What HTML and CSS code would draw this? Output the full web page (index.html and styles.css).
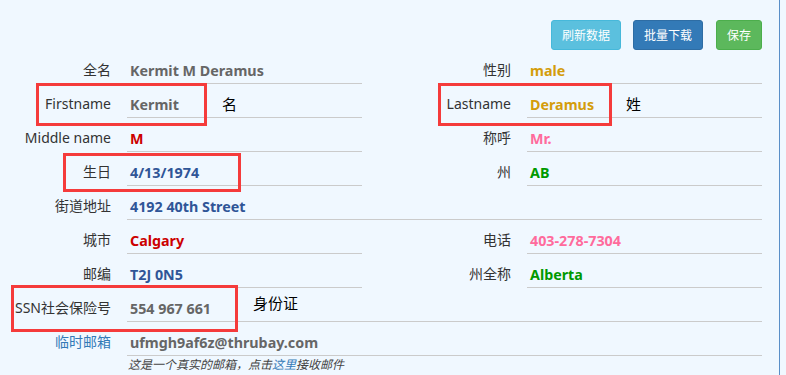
FILE: index.html
```html
<!DOCTYPE html>
<html lang="zh">
<head>
<meta charset="utf-8">
<title>Profile</title>
<link rel="stylesheet" href="styles.css">
</head>
<body>
<div class="page">
  <div class="toolbar">
    <button class="btn btn-info">刷新数据</button>
    <button class="btn btn-primary">批量下载</button>
    <button class="btn btn-success">保存</button>
  </div>
  <div class="form">
    <div class="lab">全名</div><div class="val c-grey">Kermit M Deramus</div>
    <div class="lab r">性别</div><div class="val c-gold">male</div>

    <div class="lab">Firstname</div><div class="val c-grey">Kermit</div>
    <div class="lab r">Lastname</div><div class="val c-gold">Deramus</div>

    <div class="lab">Middle name</div><div class="val c-red">M</div>
    <div class="lab r">称呼</div><div class="val c-pink">Mr.</div>

    <div class="lab">生日</div><div class="val c-navy">4/13/1974</div>
    <div class="lab r">州</div><div class="val c-green">AB</div>

    <div class="lab">街道地址</div><div class="val wide c-navy">4192 40th Street</div>

    <div class="lab">城市</div><div class="val c-red">Calgary</div>
    <div class="lab r">电话</div><div class="val c-pink">403-278-7304</div>

    <div class="lab">邮编</div><div class="val c-navy">T2J 0N5</div>
    <div class="lab r">州全称</div><div class="val c-green">Alberta</div>

    <div class="lab">SSN社会保险号</div><div class="val wide c-grey">554 967 661</div>

    <div class="lab link">临时邮箱</div><div class="val wide c-grey">ufmgh9af6z@thrubay.com</div>
    <div class="note">这是一个真实的邮箱，点击<span class="here">这里</span>接收邮件</div>
  </div>

  <div class="mark box-first"></div>
  <div class="mark box-last"></div>
  <div class="mark box-birth"></div>
  <div class="mark box-ssn"></div>
  <div class="anno anno-first">名</div>
  <div class="anno anno-last">姓</div>
  <div class="anno anno-ssn">身份证</div>
</div>
</body>
</html>
```

FILE: styles.css
```css
html, body {
  margin: 0;
  padding: 0;
  background: #f0f8ff;
}
body {
  font-family: "Noto Sans", "Noto Sans CJK SC", sans-serif;
  color: #333;
}
.page {
  position: relative;
  width: 779px;
  height: 375px;
  border-right: 1px solid #5a8fc8;
  overflow: hidden;
}
.toolbar {
  width: 762px;
  height: 50px;
  box-sizing: border-box;
  padding-top: 20px;
  display: flex;
  justify-content: flex-end;
  gap: 12px;
}
.btn {
  height: 30px;
  padding: 0 10px;
  border: 1px solid transparent;
  border-radius: 3px;
  color: #fff;
  font-family: "Noto Sans CJK SC", sans-serif;
  font-size: 12px;
  line-height: 28px;
}
.btn-info { background: #5bc0de; border-color: #46b8da; }
.btn-primary { background: #337ab7; border-color: #2e6da4; }
.btn-success { background: #5cb85c; border-color: #4cae4c; margin-left: 1px; }

.form {
  display: grid;
  grid-template-columns: 127px 235px 38px 127px 235px;
  grid-auto-rows: 34px;
}
.lab {
  grid-column: 1;
  display: flex;
  align-items: flex-end;
  justify-content: flex-end;
  padding: 0 16px 4px 0;
  font-size: 14px;
  line-height: 20px;
  color: #333;
  white-space: nowrap;
}
.lab.r { grid-column: 4; }
.lab.link { color: #337ab7; }
.val {
  display: flex;
  align-items: flex-end;
  padding: 0 0 2px 3px;
  border-bottom: 1px solid #cbcbcb;
  font-size: 14.3px;
  line-height: 20px;
  font-weight: bold;
  white-space: nowrap;
}
.val.wide { grid-column: 2 / 6; }
.note {
  grid-column: 2 / 6;
  padding-left: 1px;
  font-size: 12px;
  line-height: 18px;
  font-style: italic;
  color: #444;
}
.note .here { color: #337ab7; }

.c-grey { color: #666; }
.c-gold { color: #d49d0c; }
.c-red { color: #cc0000; }
.c-pink { color: #ff6b9c; }
.c-navy { color: #2f5597; }
.c-green { color: #009900; }

.mark {
  position: absolute;
  border: 3px solid #f53b3b;
  box-sizing: border-box;
}
.box-first { left: 36px; top: 83px; width: 171px; height: 43px; }
.box-last { left: 438px; top: 83px; width: 174px; height: 43px; }
.box-birth { left: 63px; top: 153px; width: 178px; height: 39px; }
.box-ssn { left: 11px; top: 285px; width: 227px; height: 47px; }
.anno {
  position: absolute;
  font-family: "Noto Sans CJK SC", sans-serif;
  font-size: 15px;
  line-height: 20px;
  color: #000;
}
.anno-first { left: 222px; top: 94px; }
.anno-last { left: 626px; top: 94px; }
.anno-ssn { left: 253px; top: 293px; }
```
